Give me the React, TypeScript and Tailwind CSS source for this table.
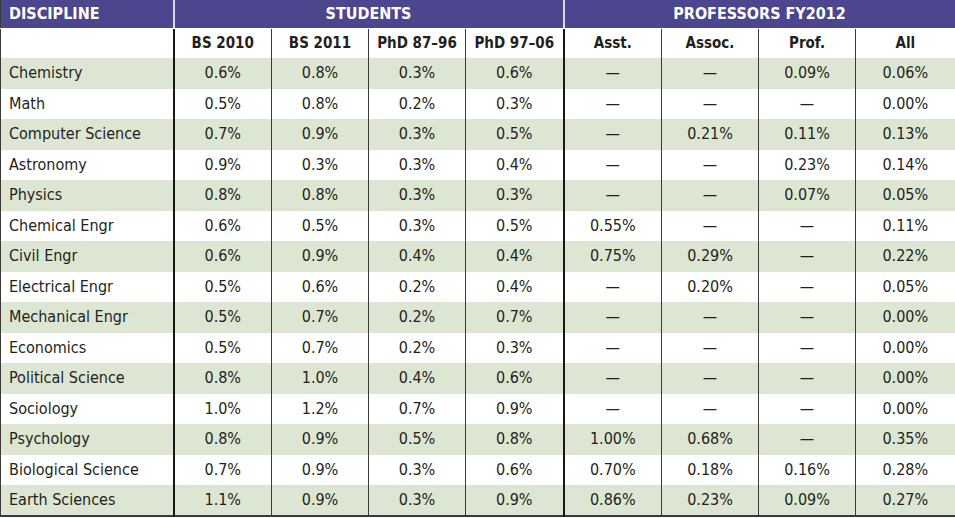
import React from 'react';

type Row = [string, ...string[]];

const rows: Row[] = [
  ['Chemistry', '0.6%', '0.8%', '0.3%', '0.6%', '—', '—', '0.09%', '0.06%'],
  ['Math', '0.5%', '0.8%', '0.2%', '0.3%', '—', '—', '—', '0.00%'],
  ['Computer Science', '0.7%', '0.9%', '0.3%', '0.5%', '—', '0.21%', '0.11%', '0.13%'],
  ['Astronomy', '0.9%', '0.3%', '0.3%', '0.4%', '—', '—', '0.23%', '0.14%'],
  ['Physics', '0.8%', '0.8%', '0.3%', '0.3%', '—', '—', '0.07%', '0.05%'],
  ['Chemical Engr', '0.6%', '0.5%', '0.3%', '0.5%', '0.55%', '—', '—', '0.11%'],
  ['Civil Engr', '0.6%', '0.9%', '0.4%', '0.4%', '0.75%', '0.29%', '—', '0.22%'],
  ['Electrical Engr', '0.5%', '0.6%', '0.2%', '0.4%', '—', '0.20%', '—', '0.05%'],
  ['Mechanical Engr', '0.5%', '0.7%', '0.2%', '0.7%', '—', '—', '—', '0.00%'],
  ['Economics', '0.5%', '0.7%', '0.2%', '0.3%', '—', '—', '—', '0.00%'],
  ['Political Science', '0.8%', '1.0%', '0.4%', '0.6%', '—', '—', '—', '0.00%'],
  ['Sociology', '1.0%', '1.2%', '0.7%', '0.9%', '—', '—', '—', '0.00%'],
  ['Psychology', '0.8%', '0.9%', '0.5%', '0.8%', '1.00%', '0.68%', '—', '0.35%'],
  ['Biological Science', '0.7%', '0.9%', '0.3%', '0.6%', '0.70%', '0.18%', '0.16%', '0.28%'],
  ['Earth Sciences', '1.1%', '0.9%', '0.3%', '0.9%', '0.86%', '0.23%', '0.09%', '0.27%'],
];

const subHeads = ['BS 2010', 'BS 2011', 'PhD 87–96', 'PhD 97–06', 'Asst.', 'Assoc.', 'Prof.', 'All'];

// left border of each numeric column: thick after discipline and after students group
const leftBorder = (i: number) =>
  i === 0 || i === 4 ? 'border-l-2 border-l-[#1a1718]' : 'border-l border-l-[#3a3a3a]';

export default function App() {
  return (
    <div className="w-[955px] h-[518px] bg-white overflow-hidden font-['Liberation_Sans_Narrow','DejaVu_Sans_Condensed',sans-serif] text-[#231f20]">
      <table className="w-[955px] table-fixed border-collapse border-l border-r-2 border-b-2 border-[#3a3a3a]">
        <colgroup>
          <col className="w-[173px]" />
          <col className="w-[98px]" />
          <col className="w-[97px]" />
          <col className="w-[97px]" />
          <col className="w-[98px]" />
          <col className="w-[98px]" />
          <col className="w-[97px]" />
          <col className="w-[97px]" />
          <col className="w-[100px]" />
        </colgroup>
        <thead>
          <tr className="h-[28px] bg-[#4b468d] text-white font-bold text-[16px]">
            <th className="text-left pl-2 border-b border-b-white">DISCIPLINE</th>
            <th colSpan={4} className="text-center border-l-2 border-l-white/80 border-b border-b-white">
              STUDENTS
            </th>
            <th colSpan={4} className="text-center border-l-2 border-l-white/80 border-b border-b-white">
              PROFESSORS FY2012
            </th>
          </tr>
          <tr className="h-[30px] bg-white font-bold text-[15px]">
            <th />
            {subHeads.map((h, i) => (
              <th key={h} className={`text-center ${leftBorder(i)}`}>
                {h}
              </th>
            ))}
          </tr>
        </thead>
        <tbody>
          {rows.map((r, ri) => (
            <tr key={r[0]} className={`h-[30.5px] text-[16px] ${ri % 2 === 0 ? 'bg-[#dde6d2]' : 'bg-white'}`}>
              <td className="pl-2 text-left whitespace-nowrap">{r[0]}</td>
              {r.slice(1).map((v, i) => (
                <td key={i} className={`text-center ${leftBorder(i)}`}>
                  {v}
                </td>
              ))}
            </tr>
          ))}
        </tbody>
      </table>
    </div>
  );
}
